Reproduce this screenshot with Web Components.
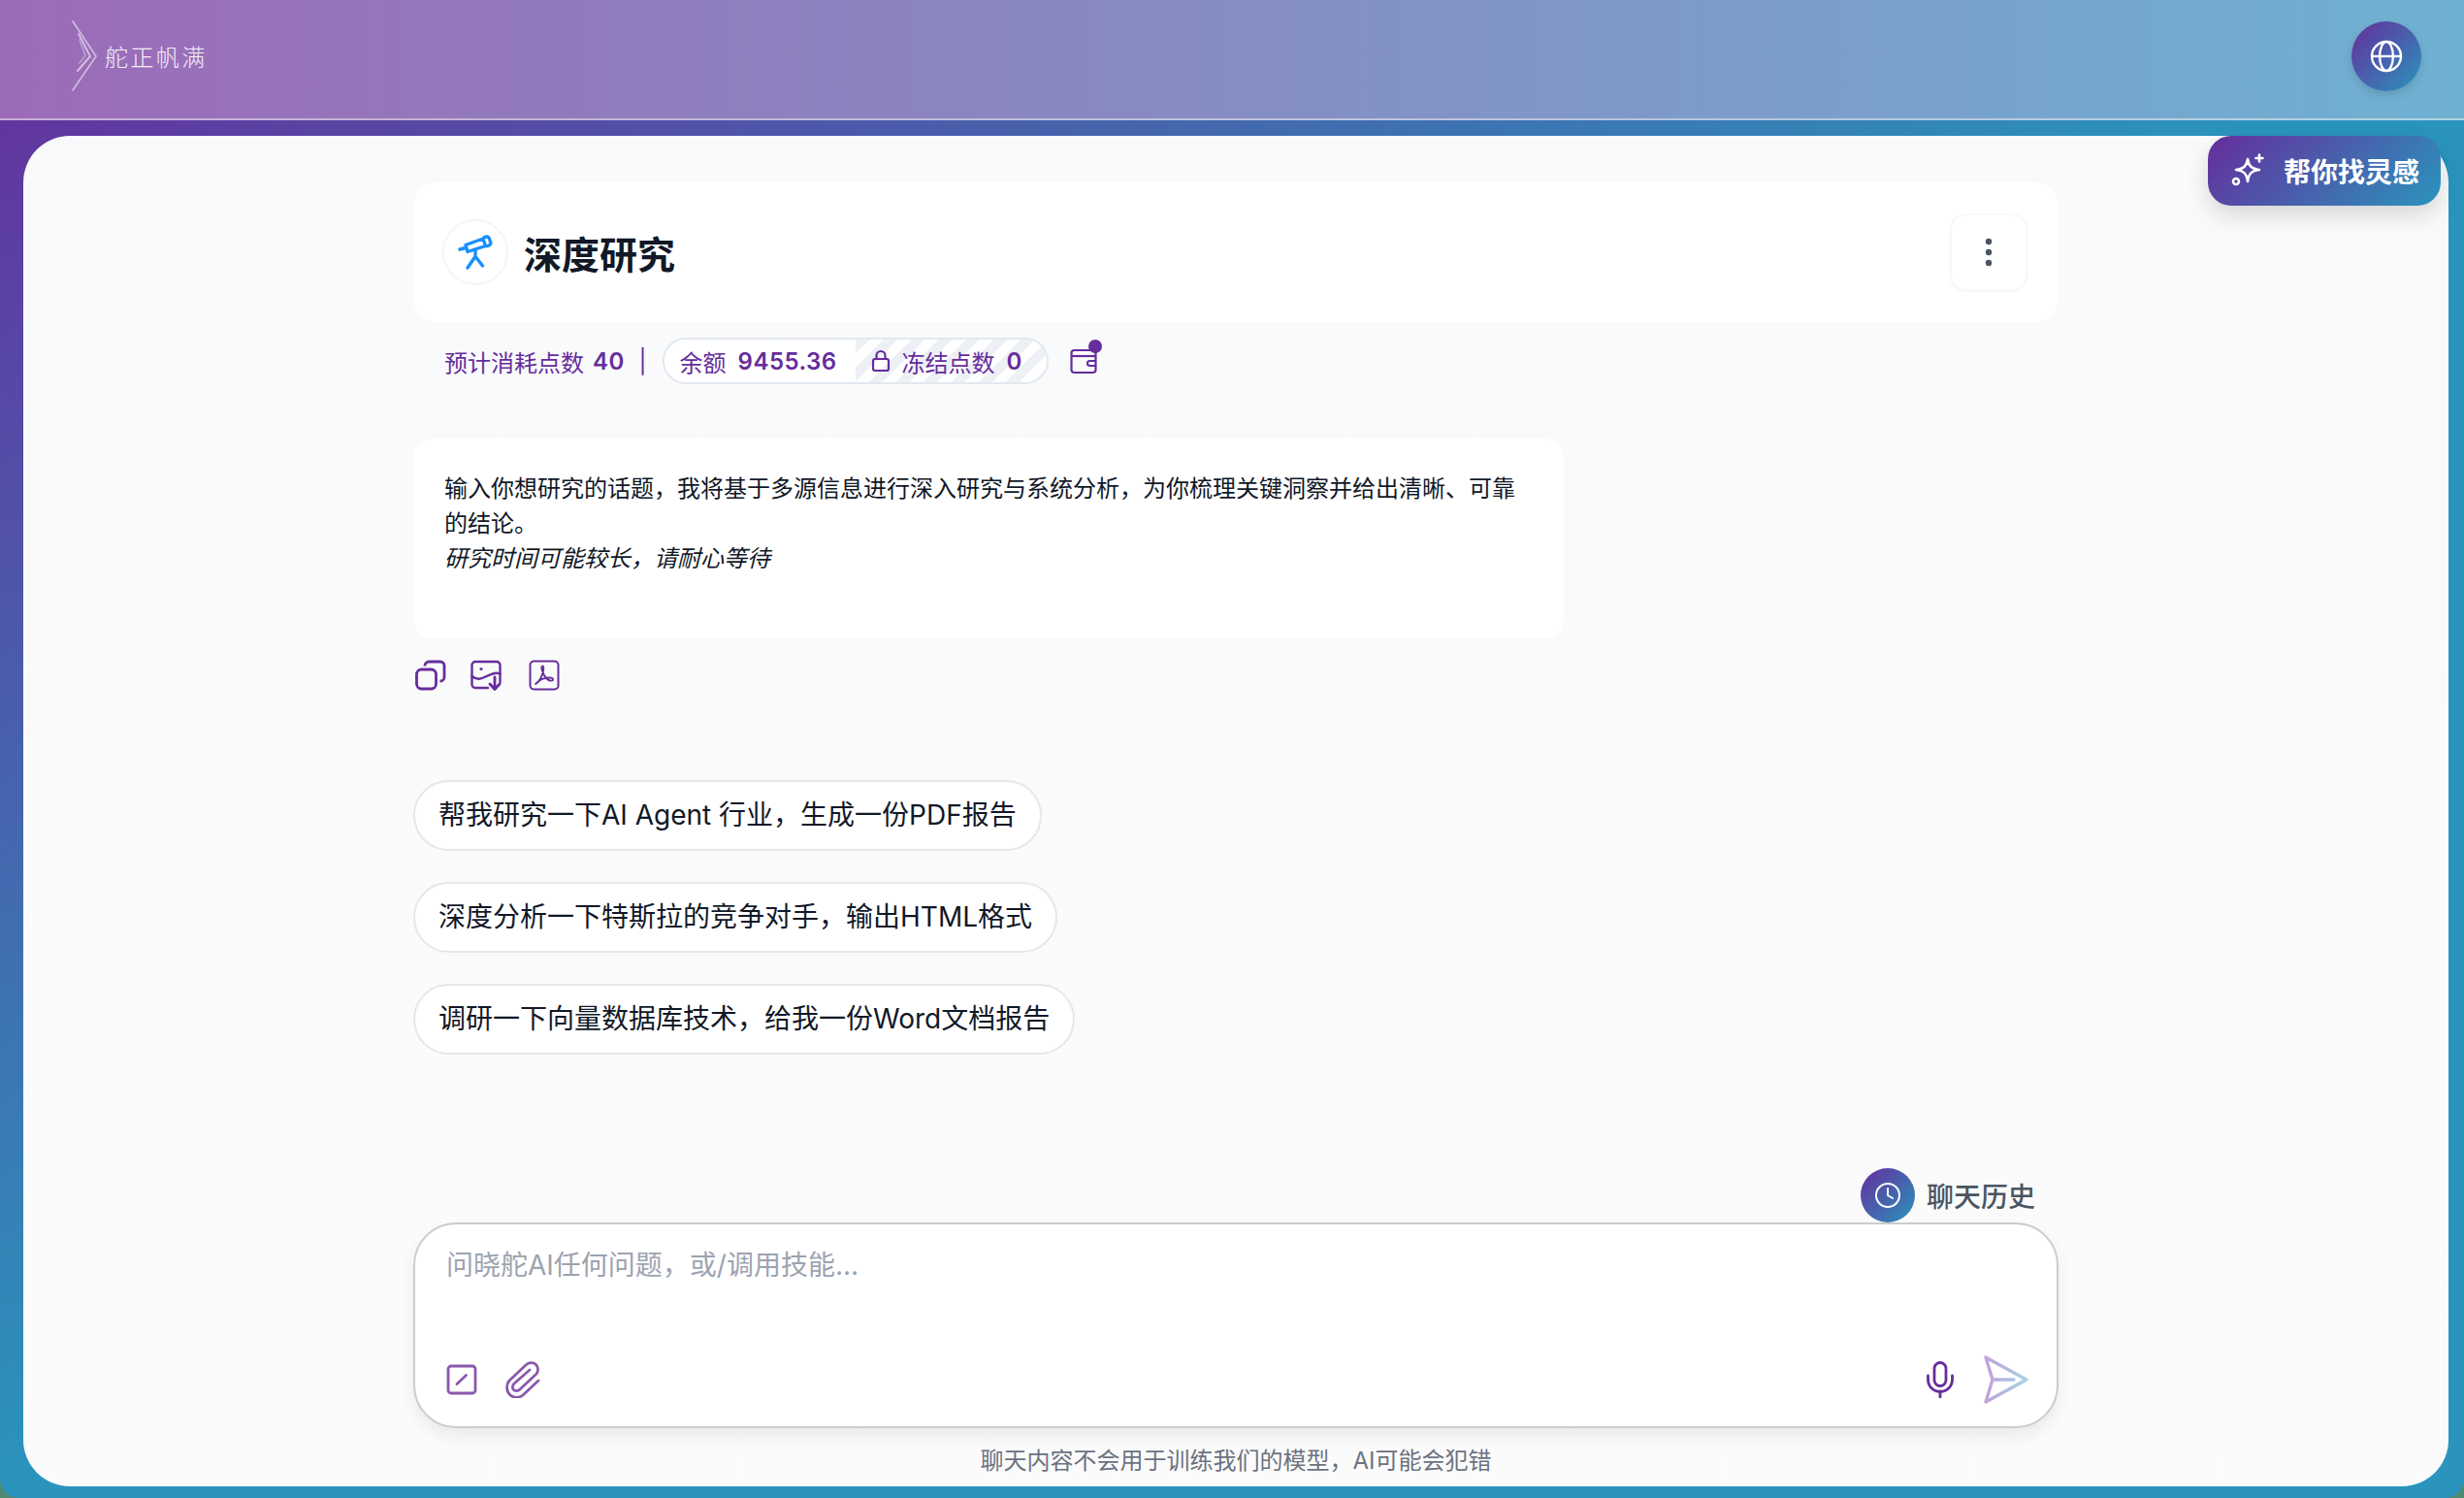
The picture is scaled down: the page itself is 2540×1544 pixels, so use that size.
<!DOCTYPE html>
<html lang="zh">
<head>
<meta charset="utf-8">
<title>深度研究</title>
<style>
  html, body { margin: 0; height: 100%; background: #4f8a72; }
  body { font-family: Inter, "Noto Sans CJK SC", sans-serif; overflow: hidden; }
</style>
</head>
<body>
<app-shell>
  <top-bar slot="top"></top-bar>
  <inspire-button slot="float">帮你找灵感</inspire-button>
  <title-card>深度研究</title-card>
  <points-bar></points-bar>
  <intro-bubble>
    <p>输入你想研究的话题，我将基于多源信息进行深入研究与系统分析，为你梳理关键洞察并给出清晰、可靠的结论。</p>
    <p><em>研究时间可能较长，请耐心等待</em></p>
  </intro-bubble>
  <action-icons></action-icons>
  <prompt-chips>
    <prompt-chip>帮我研究一下AI Agent 行业，生成一份PDF报告</prompt-chip>
    <prompt-chip>深度分析一下特斯拉的竞争对手，输出HTML格式</prompt-chip>
    <prompt-chip>调研一下向量数据库技术，给我一份Word文档报告</prompt-chip>
  </prompt-chips>
  <chat-history slot="bottom">聊天历史</chat-history>
  <chat-input slot="bottom"></chat-input>
  <foot-note slot="bottom">聊天内容不会用于训练我们的模型，AI可能会犯错</foot-note>
</app-shell>

<script>
const GRADIENT = "linear-gradient(135deg, #662d9c, #2a94bd)";

function define(name, html) {
  customElements.define(name, class extends HTMLElement {
    constructor() {
      super();
      this.attachShadow({ mode: "open" }).innerHTML = html;
    }
  });
}

define("app-shell", `
  <style>
    :host {
      display: flex; flex-direction: column; height: 1544px; overflow: hidden;
      border-radius: 0 0 20px 20px;
      background: linear-gradient(to bottom right, #662d9c 0%, #2a94bd 50%, #2a94bd 100%);
    }
    .body { flex: 1; min-height: 0; padding: 16px 16px 12px 24px; display: flex; position: relative; }
    .card {
      flex: 1; min-width: 0; background: #fafafa; border-radius: 48px;
      display: flex; flex-direction: column; align-items: center;
      background: linear-gradient(#f9fafb, #fbfbfb);
    }
    .col { width: 1696px; flex: 1; display: flex; flex-direction: column; min-height: 0; padding-top: 48px; }
    .main { flex: 1; min-height: 0; }
    ::slotted(inspire-button) { position: absolute; top: 16px; right: 24px; }
  </style>
  <slot name="top"></slot>
  <div class="body">
    <div class="card">
      <div class="col">
        <div class="main"><slot></slot></div>
        <slot name="bottom"></slot>
      </div>
    </div>
    <slot name="float"></slot>
  </div>
`);

define("top-bar", `
  <style>
    :host {
      display: flex; align-items: center; justify-content: space-between; box-sizing: border-box;
      height: 124px; padding: 0 44px 6px 74px; flex: none;
      background: linear-gradient(to right, #9c6bb8, #8a86c0 40%, #6fb1d1);
      border-bottom: 2px solid rgba(255,255,255,.45);
    }
    .logo { display: flex; align-items: center; gap: 6px; color: #f4eef8; }
    .name { font: 300 24px "Noto Sans CJK SC", sans-serif; letter-spacing: 2.4px; margin-top: -1px; }
    .globe {
      width: 72px; height: 72px; border-radius: 50%; background: ${GRADIENT};
      display: grid; place-items: center; box-shadow: 0 4px 10px rgba(0,0,0,.12);
    }
  </style>
  <div class="logo">
    <svg width="28" height="74" viewBox="0 0 28 74" fill="none" stroke-linecap="round">
      <defs>
        <linearGradient id="sh" x1="0" y1="0" x2="1" y2="0">
          <stop offset="0" stop-color="#fff" stop-opacity=".1"/><stop offset="1" stop-color="#fff" stop-opacity=".95"/>
        </linearGradient>
      </defs>
      <path d="M1 1 L25 37 L1 72" stroke="#fff" stroke-opacity=".55" stroke-width="1.6"/>
      <path d="M7 14 L19 37 L6 52" stroke="#fff" stroke-opacity=".55" stroke-width="2"/>
      <path d="M8 20 L14 36 L8 44" stroke="#fff" stroke-opacity=".3" stroke-width="2"/>
    </svg>
    <span class="name">舵正帆满</span>
  </div>
  <div class="globe">
    <svg width="36" height="36" viewBox="0 0 24 24" fill="none" stroke="#fff" stroke-width="1.6">
      <circle cx="12" cy="12" r="10"/><ellipse cx="12" cy="12" rx="4.6" ry="10"/><path d="M2 12h20"/>
    </svg>
  </div>
`);

define("inspire-button", `
  <style>
    :host {
      display: flex; align-items: center; gap: 18px; box-sizing: border-box;
      width: 240px; height: 72px; padding: 0 24px 0 24px; border-radius: 24px;
      background: ${GRADIENT}; color: #fff;
      font: 700 28px "Noto Sans CJK SC", sans-serif;
      box-shadow: 0 10px 24px rgba(0,0,0,.14);
    }
    svg { flex: none; }
    span { white-space: nowrap; }
  </style>
  <svg width="36" height="36" viewBox="0 0 36 36" fill="none" stroke="#fff" stroke-width="2.6" stroke-linecap="round" stroke-linejoin="round">
    <path d="M17 5c1 7 4 10 12 11-8 1-11 4-12 12-1-8-4-11-12-12 8-1 11-4 12-11z" transform="translate(0 1)"/>
    <path d="M29 1.500v7M25.500 5h7"/>
    <circle cx="5" cy="29" r="3"/>
  </svg>
  <span><slot></slot></span>
`);

define("title-card", `
  <style>
    :host {
      display: flex; align-items: center; box-sizing: border-box; height: 144px;
      padding: 0 32px 0 30px; background: #fff; border-radius: 24px;
    }
    .icon {
      width: 68px; height: 68px; border-radius: 50%; border: 2px solid #f3f6fa; box-sizing: border-box;
      display: grid; place-items: center; margin-right: 16px;
    }
    .name { flex: 1; font: 700 39px "Noto Sans CJK SC", sans-serif; color: #111827; }
    .more {
      width: 80px; height: 80px; border-radius: 16px; box-sizing: border-box; border: 2px solid #f7f8fa;
      display: grid; place-items: center; box-shadow: 0 1px 3px rgba(0,0,0,.03);
    }
  </style>
  <div class="icon">
    <svg width="36" height="36" viewBox="0 0 36 36" fill="none" stroke="#1890ff" stroke-width="3.400" stroke-linecap="round" stroke-linejoin="round">
      <path d="M2 15l6-1.500M8 10.500l18-6.500 2.500 7.500-18.500 6z"/>
      <path d="M26 4c1-2 5-3 6-1l1.800 5c.6 2-2 4-5.300 3.500"/>
      <path d="M18 16v8M17.500 23L10 34M18.500 23l7 9"/>
    </svg>
  </div>
  <div class="name"><slot></slot></div>
  <div class="more">
    <svg width="8" height="30" viewBox="0 0 8 30" fill="#4b5563"><circle cx="4" cy="4" r="3.200"/><circle cx="4" cy="15" r="3.200"/><circle cx="4" cy="26" r="3.200"/></svg>
  </div>
`);

define("points-bar", `
  <style>
    :host {
      display: flex; align-items: center; height: 48px; margin-top: 16px; padding-left: 32px;
      color: #662d9c; font: 400 24px Inter, "Noto Sans CJK SC", sans-serif; white-space: nowrap;
    }
    b { font-weight: 600; letter-spacing: .5px; }
    .cost { display: flex; gap: 9px; align-items: center; }
    .sep { margin: 0 16px 0 8px; }
    .pill {
      display: flex; height: 48px; box-sizing: border-box; width: 398px;
      border: 2px solid #e2e8f0; border-radius: 24px; overflow: hidden; align-items: center;
    }
    .bal { width: 196px; box-sizing: border-box; padding-left: 16px; display: flex; gap: 12px; align-items: center; height: 100%; background: #fff; }
    .frozen {
      flex: 1; height: 100%; display: flex; align-items: center; gap: 12px; padding-left: 16px;
      border-left: 1px solid #fff;
      background: repeating-linear-gradient(-45deg, #edf0f5 0 10px, #fff 10px 20px);
    }
    .wallet { position: relative; margin-left: 22px; display: flex; }
    .dot { position: absolute; right: -5px; top: -8px; width: 14px; height: 14px; border-radius: 50%; background: #662d9c; }
  </style>
  <span class="cost">预计消耗点数 <b>40</b></span><span class="sep">&nbsp;|</span>
  <div class="pill">
    <div class="bal">余额 <b>9455.36</b></div>
    <div class="frozen">
      <svg width="20" height="24" viewBox="0 0 20 24" fill="none" stroke="#662d9c" stroke-width="2.200"><rect x="2" y="10" width="16" height="12" rx="2"/><path d="M5.500 10V6.500a4.500 4.500 0 0 1 9 0V10"/></svg>
      <span>冻结点数</span> <b>0</b>
    </div>
  </div>
  <div class="wallet">
    <svg width="28" height="28" viewBox="0 0 28 28" fill="none" stroke="#662d9c" stroke-width="2.200" stroke-linejoin="round"><rect x="1.500" y="3" width="25" height="23" rx="3"/><path d="M1.500 9h25"/><path d="M26.500 14h-6a2.500 2.500 0 0 0 0 5h6"/></svg>
    <span class="dot"></span>
  </div>
`);

define("intro-bubble", `
  <style>
    :host {
      display: block; box-sizing: border-box; width: 1186px; height: 206px; margin-top: 56px;
      padding: 32px 32px 0; background: #fff; border-radius: 20px;
      font: 400 24px/36px "Noto Sans CJK SC", sans-serif; color: #111827;
    }
    ::slotted(p) { margin: 0; }
  </style>
  <slot></slot>
`);

define("action-icons", `
  <style>
    :host { display: flex; margin-top: 20px; padding-left: 2px; height: 36px; align-items: center; }
    svg { flex: none; }
  </style>
  <svg width="32" height="32" viewBox="0 0 32 32" fill="none" stroke="#662d9c" stroke-width="2.800" stroke-linejoin="round" style="margin-right:25px">
    <rect x="1.500" y="10" width="20" height="20" rx="5"/>
    <path d="M10 6.500V6a4 4 0 0 1 4-4h12a4 4 0 0 1 4 4v12a4 4 0 0 1-4 4h-.5"/>
  </svg>
  <svg width="32" height="32" viewBox="0 0 32 32" fill="none" stroke="#662d9c" stroke-width="2.400" stroke-linecap="round" stroke-linejoin="round" style="margin-right:28px">
    <path d="M18 29H5a3.500 3.500 0 0 1-3.500-3.500v-20A3.500 3.500 0 0 1 5 2h22a3.500 3.500 0 0 1 3.500 3.500V23"/>
    <path d="M1.500 17c5 4 9 3 14 .5s10-5 15-3"/>
    <circle cx="11" cy="9.500" r="1.600" fill="#662d9c" stroke="none"/>
    <path d="M25 18v12M20 25l5 5.500 5-5.500" stroke-width="2.800"/>
  </svg>
  <svg width="32" height="32" viewBox="0 0 32 32" fill="none" stroke="#662d9c" stroke-width="2" stroke-linejoin="round">
    <rect x="1.500" y="1.500" width="29" height="29" rx="4"/>
    <path d="M7.500 24.500c3-1.500 6-7 7.500-13 .8-3.500 0-5.500-1-5-1.500 .5-.5 5 2 9.500s6 6 8 5.500c2-.6 1.500-3-2-3-4 0-9 1.500-11.500 3.500-2.500 1.500-4 3.500-3 3z" stroke-width="1.800"/>
  </svg>
`);

define("prompt-chips", `
  <style>
    :host { display: flex; flex-direction: column; align-items: flex-start; gap: 32px; margin-top: 90px; }
  </style>
  <slot></slot>
`);

define("prompt-chip", `
  <style>
    :host {
      display: block; box-sizing: border-box; height: 73px; padding: 0 24px;
      background: #fff; border: 2px solid #e5e7eb; border-radius: 37px;
      font: 400 28px/69px Inter, "Noto Sans CJK SC", sans-serif; color: #111827; white-space: nowrap;
    }
  </style>
  <slot></slot>
`);

define("chat-history", `
  <style>
    :host {
      display: flex; align-items: center; justify-content: flex-end; gap: 12px; height: 56px;
      padding-right: 24px; margin-bottom: 4px; transform: translateY(4px);
      font: 500 28px "Noto Sans CJK SC", sans-serif; color: #4b5563;
    }
    .clock { width: 56px; height: 56px; border-radius: 50%; background: ${GRADIENT}; display: grid; place-items: center; }
  </style>
  <div class="clock">
    <svg width="28" height="28" viewBox="0 0 28 28" fill="none" stroke="#fff" stroke-width="2" stroke-linecap="round"><circle cx="14" cy="14" r="12"/><path d="M14 7v7l5 3"/></svg>
  </div>
  <span><slot></slot></span>
`);

define("chat-input", `
  <style>
    :host {
      display: flex; flex-direction: column; justify-content: space-between; box-sizing: border-box; height: 212px;
      padding: 22px 32px 22px 32px; background: #fff; border: 2px solid #ccc; border-radius: 44px;
      box-shadow: 0 8px 16px rgba(0,0,0,.07);
    }
    .ph { font: 400 28px/40px Inter, "Noto Sans CJK SC", sans-serif; color: #9ca3af; }
    .tools { display: flex; align-items: center; }
    .grow { flex: 1; }
    .tools svg { flex: none; }
  </style>
  <div class="ph">问晓舵AI任何问题，或/调用技能...</div>
  <div class="tools">
    <svg width="32" height="32" viewBox="0 0 32 32" fill="none" stroke="#8a58ad" stroke-width="2.800" stroke-linecap="round" stroke-linejoin="round" style="margin-right:28px">
      <rect x="2" y="2" width="28" height="28" rx="3"/><path d="M11 20.500l9.500-9"/>
    </svg>
    <svg width="38" height="38" viewBox="0 0 38 38" fill="none" stroke="#8a58ad" stroke-width="2.800" stroke-linecap="round" stroke-linejoin="round">
      <path d="M35 20L19 35c-4 3.500-10 3-13.500-.5S1.500 24 5 20L22 4c3-3 8-3 10.500-.5s3 7 0 10L16 29c-2 2-5 2-6.500.5s-1.500-4.500.5-6.500L26 9"/>
    </svg>
    <span class="grow"></span>
    <svg width="28" height="38" viewBox="0 0 28 38" fill="none" stroke="#662d9c" stroke-width="2.800" stroke-linecap="round" style="margin-right:30px">
      <rect x="8" y="1.500" width="12" height="24" rx="6"/><path d="M1.500 15v4a12.500 12.500 0 0 0 25 0v-4M14 31v6"/>
    </svg>
    <svg width="48" height="52" viewBox="0 0 48 52" fill="none" stroke-width="3.400" stroke-linecap="round" stroke-linejoin="round" style="margin-right:-4px">
      <defs><linearGradient id="snd" x1="0" y1="0" x2="1" y2="0"><stop offset=".1" stop-color="#bfa6da"/><stop offset="1" stop-color="#a5d3e6"/></linearGradient></defs>
      <path d="M3 3L45 26 3 49l7-23z M10 26h22" stroke="url(#snd)"/>
    </svg>
  </div>
`);

define("foot-note", `
  <style>
    :host {
      display: block; text-align: center; height: 60px; line-height: 68px;
      font: 400 24px/68px Inter, "Noto Sans CJK SC", sans-serif; color: #6b7280;
    }
  </style>
  <slot></slot>
`);
</script>
</body>
</html>
